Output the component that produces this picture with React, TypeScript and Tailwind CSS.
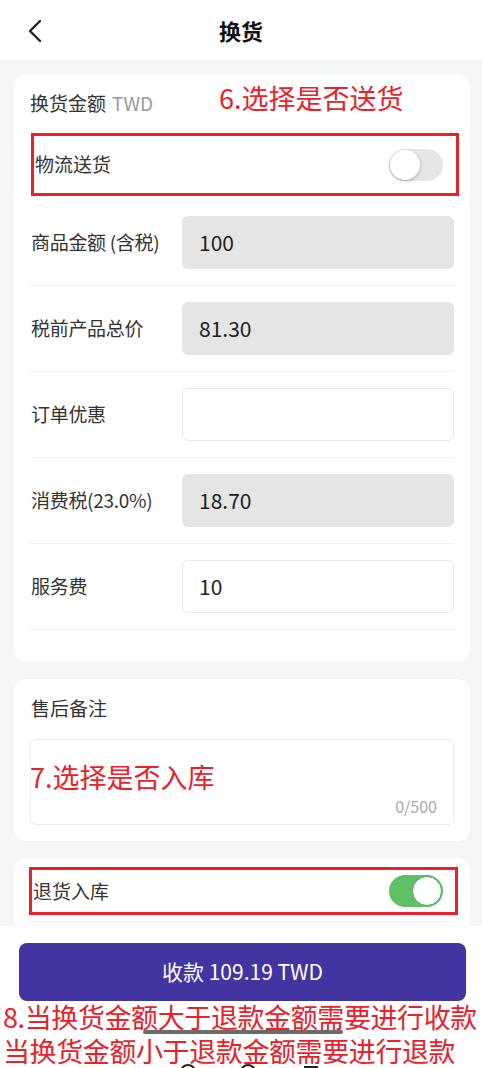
import React from "react";

const font = "font-['Noto_Sans_CJK_SC','Noto_Sans',sans-serif]";

function Toggle({ on }: { on: boolean }) {
  return on ? (
    <div className="relative h-[32px] w-[54px] rounded-full bg-[#5fc066]">
      <div className="absolute right-[1px] top-[1px] h-[30px] w-[30px] rounded-full border border-[#4fa857] bg-white" />
    </div>
  ) : (
    <div className="relative h-[32px] w-[54px] rounded-full bg-[#e6e6e6]">
      <div className="absolute left-[1px] top-[1px] h-[30px] w-[30px] rounded-full bg-white shadow-[0_1px_3px_rgba(0,0,0,0.3)]" />
    </div>
  );
}

function Row({ label, value, gray }: { label: string; value: string; gray: boolean }) {
  return (
    <div className="flex items-center border-b border-[#f0f0f0] py-4">
      <div className="w-[152px] shrink-0 whitespace-nowrap pl-[1px] text-[19px] tracking-[-0.3px] text-[#333]">{label}</div>
      <div
        className={
          gray
            ? "flex h-[53px] flex-1 items-center rounded-[6px] bg-[#e5e5e5] pl-[17px] text-[21px] text-[#222]"
            : "flex h-[53px] flex-1 items-center rounded-[6px] border border-[#e8e8e8] bg-white pl-[16px] text-[21px] text-[#222]"
        }
      >
        {value}
      </div>
    </div>
  );
}

export default function App() {
  return (
    <div className={`relative flex h-[1068px] w-[482px] flex-col overflow-hidden bg-[#f4f5f7] ${font}`}>
      {/* Header */}
      <div className="relative flex h-[60px] shrink-0 items-center justify-center bg-white">
        <svg className="absolute left-[26px] top-[19px]" width="18" height="24" viewBox="0 0 18 24">
          <path d="M14 2 L4 12 L14 22" fill="none" stroke="#222" strokeWidth="2.4" strokeLinecap="round" strokeLinejoin="round" />
        </svg>
        <div className="text-[22px] font-bold text-[#111]">换货</div>
      </div>

      {/* Content */}
      <div className="flex flex-1 flex-col gap-[17px] overflow-hidden pl-[14px] pr-[12px] pt-[14px]">
        {/* Card 1 */}
        <div className="relative shrink-0 rounded-[12px] bg-white px-4 pb-[32px] pt-[17px]">
          <div className="absolute left-[205px] top-[9px] text-[27px] leading-[30px] text-[#e8212a]">6.选择是否送货</div>
          <div className="flex h-[24px] items-center text-[19px] text-[#333]">
            <span>换货金额</span>
            <span className="ml-[6px] text-[#999]">TWD</span>
          </div>
          <div className="mt-[18px] ml-[1px] mr-[-5px] flex h-[63px] items-center justify-between border-[3px] border-[#e8212a] pl-[1px] pr-[13px] text-[19px] text-[#333]">
            <span>物流送货</span>
            <Toggle on={false} />
          </div>
          <div className="mt-[4px]">
            <Row label="商品金额 (含税)" value="100" gray />
            <Row label="税前产品总价" value="81.30" gray />
            <Row label="订单优惠" value="" gray={false} />
            <Row label="消费税(23.0%)" value="18.70" gray />
            <Row label="服务费" value="10" gray={false} />
          </div>
        </div>

        {/* Card 2 */}
        <div className="shrink-0 rounded-[12px] bg-white px-4 pb-[16px] pt-[17px]">
          <div className="flex h-[24px] items-center pl-[1px] text-[19px] text-[#333]">售后备注</div>
          <div className="relative mt-[19px] h-[86px] rounded-[6px] border border-[#ececec]">
            <div className="absolute left-[-1px] top-[22px] text-[27px] leading-[30px] text-[#e8212a]">7.选择是否入库</div>
            <div className="absolute bottom-[9px] right-[16px] text-[16px] leading-[18px] text-[#aaa]">0/500</div>
          </div>
        </div>

        {/* Card 3 */}
        <div className="shrink-0 rounded-[12px] bg-white px-4 pt-[9px]">
          <div className="ml-[-1px] mr-[-4px] flex h-[48px] items-center justify-between border-[3px] border-[#e8212a] pl-[1px] pr-[12px] text-[19px] text-[#333]">
            <span>退货入库</span>
            <Toggle on />
          </div>
          <div className="mt-[6px] border-b border-[#f0f0f0]" />
          <div className="h-[40px]" />
        </div>
      </div>

      {/* Bottom bar */}
      <div className="relative flex h-[142px] shrink-0 flex-col bg-white px-[19px] pt-[17px]">
        <div className="ml-[0px] mr-[-3px] flex h-[61px] items-center justify-center rounded-[8px] bg-[#4234a1] text-[21px] text-white">
          收款 109.19 TWD
        </div>
        <div className="absolute left-[143px] top-[104px] h-[4px] w-[200px] rounded-full bg-[#6b6b6b]" />
        <div className="absolute bottom-[-12px] left-[180px] h-[16px] w-[16px] rounded-full border-2 border-[#222]" />
        <div className="absolute bottom-[-12px] left-[240px] h-[16px] w-[16px] rounded-full border-2 border-[#222]" />
        <div className="absolute bottom-[-12px] left-[304px] h-[14px] w-[14px] border-2 border-[#222]" />
        <div className="relative ml-[-16px] mt-[-1px] whitespace-nowrap text-[27px] leading-[34px] tracking-[-0.4px] text-[#e8212a]">
          8.当换货金额大于退款金额需要进行收款
          <br />
          当换货金额小于退款金额需要进行退款
        </div>
      </div>
    </div>
  );
}
